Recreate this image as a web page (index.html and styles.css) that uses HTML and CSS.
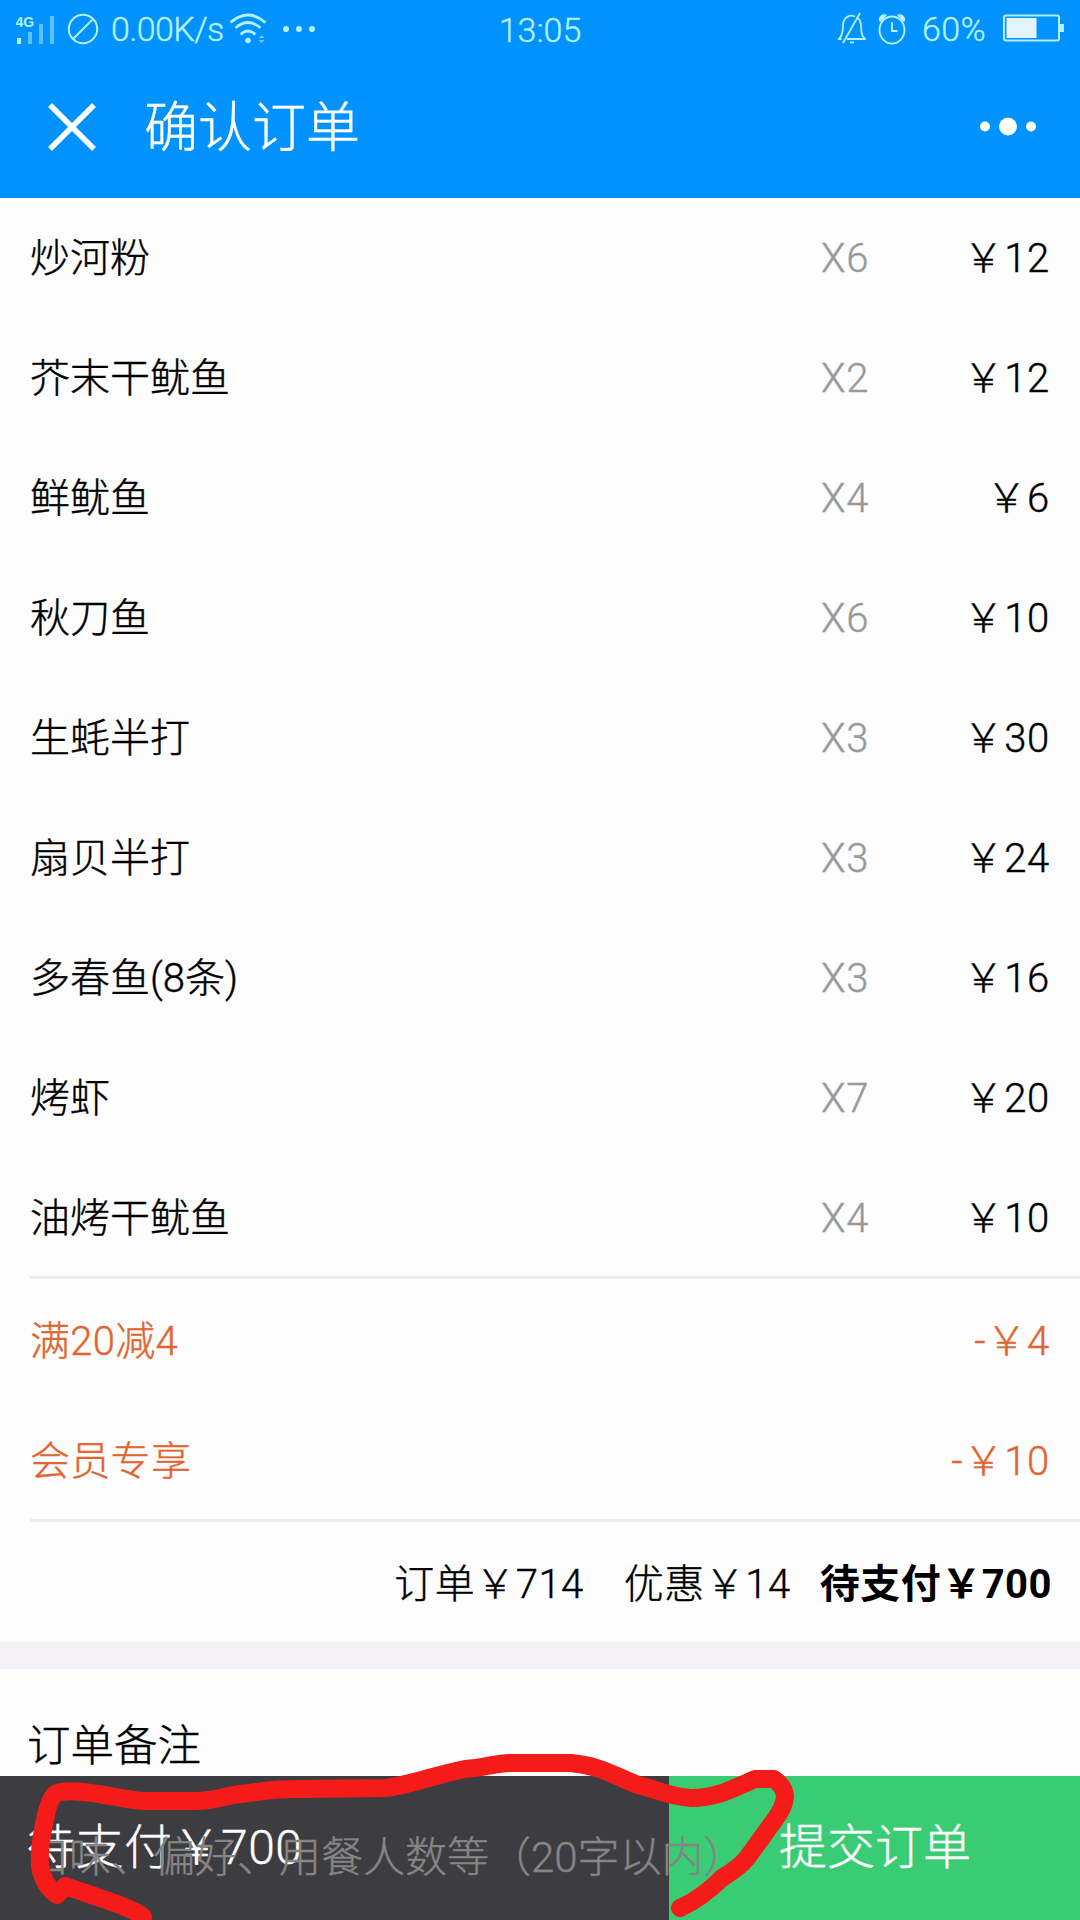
FILE: index.html
```html
<!DOCTYPE html>
<html lang="zh-CN">
<head>
<meta charset="utf-8">
<title>确认订单</title>
<link rel="stylesheet" href="styles.css">
</head>
<body>
<div class="screen">
  <header class="header">
    <div class="status">
      <div class="status-left">
        <svg class="signal" width="40" height="32" viewBox="0 0 40 32">
          <g fill="currentColor"><rect x="1" y="25" width="4" height="6"/><g opacity=".5"><rect x="12" y="19" width="4" height="12"/><rect x="23" y="11" width="4" height="20"/><rect x="34" y="3" width="4" height="28"/></g></g>
          <text class="network" x="-.5" y="14">4G</text>
        </svg>
        <svg class="blocked" width="32" height="32" viewBox="0 0 32 32" fill="none" stroke="currentColor" stroke-width="2"><circle cx="16" cy="16" r="14.2"/><path d="M6.5 25.5 26 6"/></svg>
        <span class="speed">0.00K/s</span>
        <svg class="wifi" width="38" height="32" viewBox="0 0 38 32" fill="none" stroke="currentColor" stroke-width="2.8"><path d="M1.5 9.5Q19-5.5 36.500 9.500"/><path d="M6.500 15Q19 4 31.500 15"/><path d="M11.500 21.500Q19 14.500 26.500 21.500"/><circle cx="19" cy="27.500" r="2.700" fill="currentColor" stroke="none"/><path d="M29.500 25 32.500 22 35.500 25zM29.500 27 32.500 30 35.500 27z" fill="currentColor" stroke="none" opacity=".6"/></svg>
        <svg class="more-status" width="34" height="8" viewBox="0 0 34 8" fill="currentColor"><circle cx="4" cy="4" r="3"/><circle cx="17" cy="4" r="3"/><circle cx="30" cy="4" r="3"/></svg>
      </div>
      <span class="time">13:05</span>
      <div class="status-right">
        <svg class="bell" width="28" height="34" viewBox="0 0 28 34" fill="none" stroke="currentColor" stroke-width="1.800"><path d="M17 4.500C10 1.500 5 7 5 14C5 21 4 24 1 27H3.500M9 27H27C23.500 24 23.500 21 23 14C22.800 9 21 6.500 19 5.500M22 1 5 31M12 30.300H16"/></svg>
        <svg class="alarm" width="28" height="32" viewBox="0 0 28 32" fill="none" stroke="currentColor" stroke-width="1.900"><ellipse cx="14" cy="17" rx="12.500" ry="13.500"/><path d="M14 9V18H19.500"/><path d="M1 8C0 3 5 0 9 2L2.500 9zM27 8C28 3 23 0 19 2L25.500 9z" fill="currentColor" stroke="none"/></svg>
        <span class="percent">60%</span>
        <svg class="battery" width="62" height="30" viewBox="0 0 62 30"><rect x="1" y="1.500" width="55" height="25" rx="2" fill="none" stroke="currentColor" stroke-width="2"/><rect x="3.500" y="4" width="30" height="20" fill="#e2f5ff"/><path d="M57 10h4v8h-4z" fill="currentColor"/></svg>
      </div>
    </div>
    <div class="nav">
      <svg class="close" width="50" height="50" viewBox="0 0 50 50" fill="none" stroke="currentColor" stroke-width="5.500"><path d="M3 3 47 47M47 3 3 47"/></svg>
      <h1 class="title">确认订单</h1>
      <svg class="menu" width="58" height="20" viewBox="0 0 58 20" fill="currentColor"><circle cx="6" cy="9.500" r="5"/><circle cx="29" cy="9.500" r="9"/><circle cx="52" cy="9.500" r="5"/></svg>
    </div>
  </header>

  <main class="content">
    <ul class="items">
      <li class="row"><span class="name">炒河粉</span><span class="count">X6</span><span class="price">￥12</span></li>
      <li class="row"><span class="name">芥末干鱿鱼</span><span class="count">X2</span><span class="price">￥12</span></li>
      <li class="row"><span class="name">鲜鱿鱼</span><span class="count">X4</span><span class="price">￥6</span></li>
      <li class="row"><span class="name">秋刀鱼</span><span class="count">X6</span><span class="price">￥10</span></li>
      <li class="row"><span class="name">生蚝半打</span><span class="count">X3</span><span class="price">￥30</span></li>
      <li class="row"><span class="name">扇贝半打</span><span class="count">X3</span><span class="price">￥24</span></li>
      <li class="row"><span class="name">多春鱼(8条)</span><span class="count">X3</span><span class="price">￥16</span></li>
      <li class="row"><span class="name">烤虾</span><span class="count">X7</span><span class="price">￥20</span></li>
      <li class="row"><span class="name">油烤干鱿鱼</span><span class="count">X4</span><span class="price">￥10</span></li>
    </ul>
    <ul class="discounts">
      <li class="row"><span class="name">满20减4</span><span class="price">-￥4</span></li>
      <li class="row"><span class="name">会员专享</span><span class="price">-￥10</span></li>
    </ul>
    <div class="summary"><span>订单￥714</span><span class="saved">优惠￥14</span><strong class="due">待支付￥700</strong></div>
    <section class="note">
      <h2 class="note-title">订单备注</h2>
      <span class="note-hint">口味、偏好、用餐人数等（20字以内）</span>
    </section>
  </main>

  <footer class="footer">
    <div class="total">待支付￥700</div>
    <div class="submit">提交订单</div>
  </footer>

  <svg class="marker" width="1080" height="180" viewBox="0 1740 1080 180"><path d="M143 1917Q138 1911 103 1899L65 1886L57 1895Q43 1885 40 1866Q39 1850 43 1830Q48 1800 55 1794Q62 1790 83 1792C105 1794 125 1800 143 1801H195C219 1801 227 1794 250 1793C267 1790 279 1789 300 1789L386 1788C410 1785 438 1774 465 1769C485 1768 495 1763 511 1763H571C602 1766 614 1776 638 1785C655 1789 670 1797 691 1798C718 1798 734 1788 755 1779H774Q785 1787 785 1797Q784 1807 776 1818L747 1858Q740 1867 722 1878Q702 1898 680 1908"/></svg>
</div>
</body>
</html>
```
FILE: styles.css
```css
* { box-sizing: border-box; margin: 0; padding: 0; }
body {
  font-family: Roboto, "Noto Sans CJK SC", sans-serif;
  font-weight: 300;
  font-size: 40px;
  color: #000;
  background: #fdfdfd;
  -webkit-text-stroke: .4px currentColor;
}
ul { list-style: none; }
svg { display: block; flex: none; }
.screen {
  position: relative;
  width: 1080px;
  height: 1920px;
  overflow: hidden;
  display: flex;
  flex-direction: column;
  background: #fdfdfd;
}
.header { height: 198px; background: #0092ff; color: #fff; }
.status {
  height: 56px;
  display: grid;
  grid-template-columns: 1fr auto 1fr;
  align-items: center;
  color: #b5f1ff;
  font-size: 34px;
  line-height: 56px;
  white-space: nowrap;
}
.status-left { display: flex; align-items: center; padding-left: 16px; }
.status-right { display: flex; align-items: center; justify-content: flex-end; padding-right: 15px; }
.network { font: bold 14px "Liberation Sans", sans-serif; fill: currentColor; -webkit-text-stroke: 0; }
.blocked { margin-left: 11px; }
.speed { width: 119px; padding-left: 12px; letter-spacing: -.6px; }
.time { padding-top: 2px; }
.wifi { margin-left: 11px; }
.more-status { margin-left: 15px; }
.bell { margin-right: 12px; }
.alarm { margin-right: 15px; }
.percent { width: 82px; padding-left: 1px; letter-spacing: .4px; }
.nav { height: 142px; display: flex; align-items: center; padding: 0 43px 0 47px; }
.title { margin-left: 47px; padding-top: 4px; font-size: 54px; font-weight: 300; line-height: 142px; }
.menu { margin-left: auto; }
.content { flex: 1; position: relative; }
.row {
  height: 120px;
  display: flex;
  align-items: baseline;
  padding-right: 30px;
  line-height: 121px;
  letter-spacing: .7px;
}
.name { flex: 1; letter-spacing: 0; }
.items, .discounts { margin-left: 30px; border-bottom: 3px solid #ededed; }
.items { height: 1081px; }
.discounts { height: 243px; padding-top: 2px; color: #e2652f; }
.discounts .name { letter-spacing: .3px; }
.count { width: 59px; color: #999; }
.price { width: 170px; text-align: right; }
.summary {
  height: 120px;
  display: flex;
  align-items: baseline;
  justify-content: flex-end;
  padding-right: 28px;
  line-height: 126px;
  letter-spacing: .5px;
}
.saved { margin-left: 40px; }
.due { margin-left: 29px; font-weight: 700; -webkit-text-stroke: 0; }
.note { height: 134px; border-top: 27px solid #f4f2f6; padding: 45px 27px 0; }
.note-title { font-size: 43.500px; font-weight: 300; line-height: 66px; }
.note-hint {
  position: absolute;
  z-index: 1;
  left: 27px;
  top: 1628px;
  font-size: 42px;
  line-height: 64px;
  color: #858585;
  white-space: nowrap;
}
.footer { height: 144px; display: flex; font-size: 48px; line-height: 144px; color: #fff; }
.total { width: 669px; padding-left: 27px; background: #3d3c40; letter-spacing: .5px; }
.submit { flex: 1; padding-left: 110px; background: #3acc74; }
.marker {
  position: absolute;
  z-index: 2;
  left: 0;
  bottom: 0;
  fill: none;
  stroke: #f51b19;
  stroke-width: 18px;
  stroke-linecap: round;
  stroke-linejoin: round;
}
```
